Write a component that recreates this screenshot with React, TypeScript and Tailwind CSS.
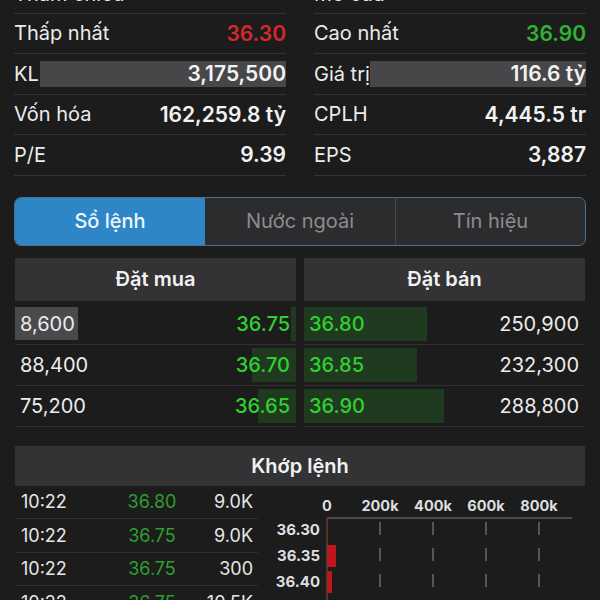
import React from "react";

const font = { fontFamily: "Inter, 'Noto Sans', sans-serif" };

function StatRow({ label, value, valueClass, barLeft, first }: { label: string; value: string; valueClass?: string; barLeft?: number; first?: boolean }) {
  return (
    <div className={"relative flex h-[40.5px] justify-between border-b border-[#333335] " + (first ? "items-end pb-[4px]" : "items-center")}>
      {barLeft !== undefined && (
        <div className="absolute right-0 top-[7px] h-[26px] bg-[#474749]" style={{ left: barLeft }} />
      )}
      <span className="relative text-[20px] text-[#ececec]">{label}</span>
      <span className={"relative text-[21px] font-semibold " + (valueClass ?? "text-[#f2f2f2]")}>{value}</span>
    </div>
  );
}

const buys = [
  { q: "8,600", p: "36.75", w: 5, hl: true },
  { q: "88,400", p: "36.70", w: 44 },
  { q: "75,200", p: "36.65", w: 38 },
];
const sells = [
  { q: "250,900", p: "36.80", w: 123 },
  { q: "232,300", p: "36.85", w: 113 },
  { q: "288,800", p: "36.90", w: 140 },
];
const trades = [
  { t: "10:22", p: "36.80", v: "9.0K" },
  { t: "10:22", p: "36.75", v: "9.0K" },
  { t: "10:22", p: "36.75", v: "300" },
  { t: "10:22", p: "36.75", v: "10.5K" },
];

function Chart() {
  const xs = [57, 110, 163, 216, 269];
  const labels = ["0", "200k", "400k", "600k", "800k"];
  const rows = [
    { l: "36.30", y: 44, w: 0 },
    { l: "36.35", y: 70, w: 9 },
    { l: "36.40", y: 96, w: 5 },
    { l: "36.45", y: 122, w: 0 },
  ];
  return (
    <svg width="315" height="130" className="block">
      {labels.map((t, i) => (
        <text key={t} x={xs[i]} y={25} textAnchor="middle" fill="#dedede" fontSize="14.5" fontWeight="700" fontFamily="Inter, sans-serif">
          {t}
        </text>
      ))}
      <line x1="57" y1="32" x2="302" y2="32" stroke="#5a5a5a" strokeWidth="1.5" />
      {rows.map((r) => (
        <g key={r.l}>
          <text x="50" y={r.y + 5} textAnchor="end" fill="#dedede" fontSize="15" fontWeight="700" fontFamily="Inter, sans-serif">
            {r.l}
          </text>
          {xs.slice(1).map((x) => (
            <line key={x} x1={x} y1={r.y - 8} x2={x} y2={r.y + 5} stroke="#6a6a6a" strokeWidth="1.5" />
          ))}
          {r.w > 0 && <rect x="57" y={r.y - 11} width={r.w} height="22" fill="#c0161b" />}
        </g>
      ))}
      <line x1="57" y1="32" x2="57" y2="130" stroke="#6b3a30" strokeWidth="1.5" />
    </svg>
  );
}

export default function App() {
  return (
    <div className="h-[600px] w-[600px] overflow-hidden bg-[#1c1c1d]" style={font}>
      <div className="mt-[-27px] grid grid-cols-2 gap-x-[28px] px-[14px]">
        <div>
          <StatRow first label="Tham chiếu" value="36.60" valueClass="text-[#c9a227]" />
          <StatRow label="Thấp nhất" value="36.30" valueClass="text-[#d3282c]" />
          <StatRow label="KL" value="3,175,500" barLeft={26} />
          <StatRow label="Vốn hóa" value="162,259.8 tỷ" />
          <StatRow label="P/E" value="9.39" />
        </div>
        <div>
          <StatRow first label="Mở cửa" value="36.60" valueClass="text-[#c9a227]" />
          <StatRow label="Cao nhất" value="36.90" valueClass="text-[#2db532]" />
          <StatRow label="Giá trị" value="116.6 tỷ" barLeft={56} />
          <StatRow label="CPLH" value="4,445.5 tr" />
          <StatRow label="EPS" value="3,887" />
        </div>
      </div>

      <div className="mx-[14px] mt-[21px] flex h-[49px] overflow-hidden rounded-[7px] border border-[#4e6f8a] bg-[#2c2c2e]">
        <div className="flex w-[190px] items-center justify-center bg-[#2f86c6] text-[20px] font-medium text-[#eef6ff]">Sổ lệnh</div>
        <div className="flex flex-1 items-center justify-center border-r border-[#474749] text-[20px] text-[#8c8c8e]">Nước ngoài</div>
        <div className="flex w-[189px] items-center justify-center text-[20px] text-[#8c8c8e]">Tín hiệu</div>
      </div>

      <div className="mt-[12px] grid grid-cols-2 gap-x-[8px] px-[15px]">
        <div>
          <div className="flex h-[43px] items-center justify-center bg-[#333335] text-[20px] font-semibold text-[#f2f2f2]">Đặt mua</div>
          <div className="pt-[3px]">
            {buys.map((b) => (
              <div key={b.q} className="relative flex h-[41px] items-center justify-between border-b border-[#303032] pl-[5px] pr-[6px]">
                <div className="absolute right-0 top-[3px] h-[34px] bg-[#1f3a1f]" style={{ width: b.w }} />
                {b.hl && <div className="absolute left-0 top-[3px] h-[33px] w-[63px] bg-[#4a4a4c]" />}
                <span className="relative text-[20px] text-[#ececec]">{b.q}</span>
                <span className="relative text-[20px] font-medium text-[#2fd12f]">{b.p}</span>
              </div>
            ))}
          </div>
        </div>
        <div>
          <div className="flex h-[43px] items-center justify-center bg-[#333335] text-[20px] font-semibold text-[#f2f2f2]">Đặt bán</div>
          <div className="pt-[3px]">
            {sells.map((s) => (
              <div key={s.q} className="relative flex h-[41px] items-center justify-between border-b border-[#303032] pl-[5px] pr-[6px]">
                <div className="absolute left-0 top-[3px] h-[34px] bg-[#1f3a1f]" style={{ width: s.w }} />
                <span className="relative text-[20px] font-medium text-[#2fd12f]">{s.p}</span>
                <span className="relative text-[20px] text-[#ececec]">{s.q}</span>
              </div>
            ))}
          </div>
        </div>
      </div>

      <div className="mx-[15px] mt-[19px] flex h-[40px] items-center justify-center bg-[#333335] text-[20px] font-semibold text-[#f2f2f2]">Khớp lệnh</div>

      <div className="flex px-[15px]">
        <div className="w-[243px]">
          {trades.map((t, i) => (
            <div key={i} className="grid h-[33.5px] grid-cols-[100px_62px_1fr] items-center border-b border-[#303032] pl-[6px] pr-[5px] text-[18px]">
              <span className="text-[#e6e6e6]">{t.t}</span>
              <span className="text-center text-[#2d9e2f]">{t.p}</span>
              <span className="text-right text-[#e6e6e6]">{t.v}</span>
            </div>
          ))}
        </div>
        <div className="ml-[12px]">
          <Chart />
        </div>
      </div>
    </div>
  );
}
